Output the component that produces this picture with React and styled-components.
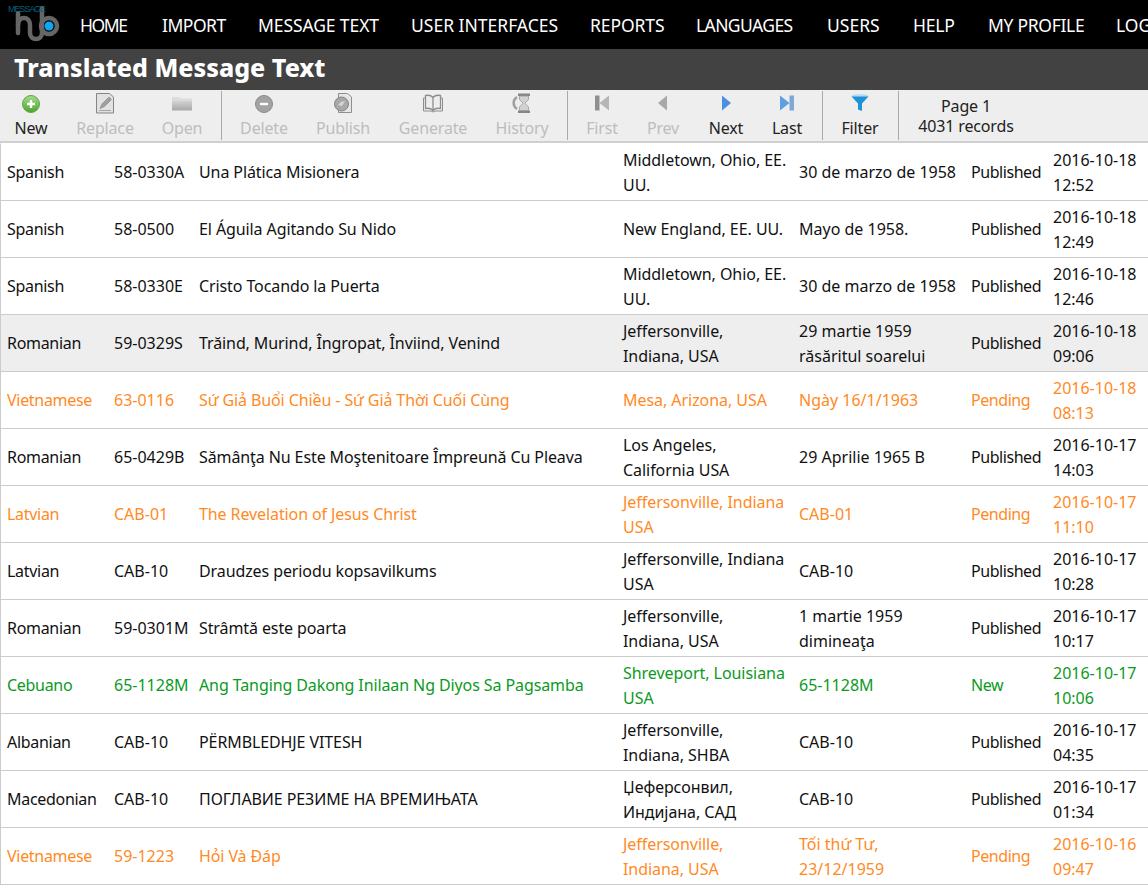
import React from 'react';
import styled, { createGlobalStyle } from 'styled-components';

const GlobalStyle = createGlobalStyle`
  html, body {
    margin: 0;
    padding: 0;
    height: 889px;
    overflow: hidden;
    background: #fff;
    font-family: 'Noto Sans', 'Open Sans', sans-serif;
  }
`;

const NAV = [
  { label: 'HOME', w: 82, track: -1.4 },
  { label: 'IMPORT', w: 96, track: -0.5 },
  { label: 'MESSAGE TEXT', w: 153, track: -0.1 },
  { label: 'USER INTERFACES', w: 179, track: 0 },
  { label: 'REPORTS', w: 106, track: -0.1 },
  { label: 'LANGUAGES', w: 131, track: -0.6 },
  { label: 'USERS', w: 86, track: 0 },
  { label: 'HELP', w: 75, track: -0.2 },
  { label: 'MY PROFILE', w: 128, track: -0.3 },
  { label: 'LOG OUT', w: 90, track: 0 },
];

const ROWS = [
  ['Spanish', '58-0330A', 'Una Plática Misionera', 'Middletown, Ohio, EE.\nUU.', '30 de marzo de 1958', 'Published', '2016-10-18\n12:52'],
  ['Spanish', '58-0500', 'El Águila Agitando Su Nido', 'New England, EE. UU.', 'Mayo de 1958.', 'Published', '2016-10-18\n12:49'],
  ['Spanish', '58-0330E', 'Cristo Tocando la Puerta', 'Middletown, Ohio, EE.\nUU.', '30 de marzo de 1958', 'Published', '2016-10-18\n12:46'],
  ['Romanian', '59-0329S', 'Trăind, Murind, Îngropat, Înviind, Venind', 'Jeffersonville,\nIndiana, USA', '29 martie 1959\nrăsăritul soarelui', 'Published', '2016-10-18\n09:06', 'selected'],
  ['Vietnamese', '63-0116', 'Sứ Giả Buổi Chiều - Sứ Giả Thời Cuối Cùng', 'Mesa, Arizona, USA', 'Ngày 16/1/1963', 'Pending', '2016-10-18\n08:13'],
  ['Romanian', '65-0429B', 'Sămânţa Nu Este Moştenitoare Împreună Cu Pleava', 'Los Angeles,\nCalifornia USA', '29 Aprilie 1965 B', 'Published', '2016-10-17\n14:03'],
  ['Latvian', 'CAB-01', 'The Revelation of Jesus Christ', 'Jeffersonville, Indiana\nUSA', 'CAB-01', 'Pending', '2016-10-17\n11:10'],
  ['Latvian', 'CAB-10', 'Draudzes periodu kopsavilkums', 'Jeffersonville, Indiana\nUSA', 'CAB-10', 'Published', '2016-10-17\n10:28'],
  ['Romanian', '59-0301M', 'Strâmtă este poarta', 'Jeffersonville,\nIndiana, USA', '1 martie 1959\ndimineaţa', 'Published', '2016-10-17\n10:17'],
  ['Cebuano', '65-1128M', 'Ang Tanging Dakong Inilaan Ng Diyos Sa Pagsamba', 'Shreveport, Louisiana\nUSA', '65-1128M', 'New', '2016-10-17\n10:06'],
  ['Albanian', 'CAB-10', 'PËRMBLEDHJE VITESH', 'Jeffersonville,\nIndiana, SHBA', 'CAB-10', 'Published', '2016-10-17\n04:35'],
  ['Macedonian', 'CAB-10', 'ПОГЛАВИЕ РЕЗИМЕ НА ВРЕМИЊАТА', 'Џеферсонвил,\nИндијана, САД', 'CAB-10', 'Published', '2016-10-17\n01:34'],
  ['Vietnamese', '59-1223', 'Hỏi Và Đáp', 'Jeffersonville,\nIndiana, USA', 'Tối thứ Tư,\n23/12/1959', 'Pending', '2016-10-16\n09:47'],
];

const statusColors = {
  Pending: '#ff8a1f',
  New: '#0b9a1e',
  Published: '#111',
};

const Page = styled.div`
  width: 1148px;
  height: 889px;
  overflow: hidden;
`;

const NavBar = styled.nav`
  height: 49px;
  background: #000;
  display: flex;
  align-items: center;
  padding-left: 8px;
  white-space: nowrap;
`;

const Logo = styled.svg`
  width: 54px;
  height: 44px;
  flex: none;
  margin-right: 18px;
  margin-top: -5px;
`;

const NavLink = styled.a`
  color: #fff;
  font-size: 17.5px;
  width: ${(p) => p.$w}px;
  letter-spacing: ${(p) => p.$track}px;
  flex: none;
`;

const TitleBar = styled.h1`
  margin: 0;
  height: 41px;
  line-height: 37px;
  background: #424242;
  color: #fff;
  font-size: 25px;
  font-weight: 800;
  padding-left: 14px;
`;

const Toolbar = styled.div`
  height: 51px;
  background: #eee;
  border-bottom: 2px solid #d0d0d0;
  display: flex;
  align-items: flex-start;
`;

const Group = styled.div`
  display: flex;
  padding: 0 ${(p) => p.$right}px 0 4px;
  height: 49px;
  margin-top: 1px;
  border-right: 1px solid #aaa;
`;

const ToolButton = styled.button`
  width: ${(p) => p.$w}px;
  border: none;
  background: none;
  padding: 0;
  font: inherit;
  font-size: 16px;
  letter-spacing: -0.15px;
  color: ${(p) => (p.$off ? '#bdbdbd' : '#222')};
  display: flex;
  flex-direction: column;
  align-items: center;
  white-space: nowrap;

  svg {
    width: 22px;
    height: 22px;
    margin-top: 2px;
    margin-bottom: 2px;
  }
`;

const PageInfo = styled.div`
  width: 134px;
  text-align: center;
  font-size: 16px;
  line-height: 20px;
  letter-spacing: -0.15px;
  color: #222;
  padding-top: 6px;
`;

const Table = styled.div`
  border-top: 1px solid #fff;
  border-left: 1px solid #ccc;
`;

const Row = styled.div`
  display: grid;
  grid-template-columns: 107px 85px 424px 176px 172px 82px 1fr;
  align-items: center;
  height: 56px;
  border-bottom: 1px solid #ccc;
  background: ${(p) => (p.$selected ? '#eee' : '#fff')};
  color: ${(p) => statusColors[p.$status]};
  font-size: 16px;
  line-height: 25px;

  > :nth-child(1) {
    letter-spacing: -0.3px;
  }
  > :nth-child(3) {
    letter-spacing: -0.1px;
  }
  > :nth-child(4) {
    letter-spacing: -0.05px;
  }
  > :nth-child(6) {
    letter-spacing: -0.45px;
  }
`;

const Cell = styled.div`
  padding-left: 6px;
  padding-top: ${(p) => (p.$multi ? 2 : 0)}px;
  white-space: pre-line;
`;

const Plus = () => (
  <svg viewBox="0 0 22 22">
    <defs>
      <linearGradient id="gr" x1="0" y1="0" x2="0" y2="1">
        <stop offset="0" stopColor="#a6dc8c" />
        <stop offset="1" stopColor="#4aa52e" />
      </linearGradient>
    </defs>
    <circle cx="11" cy="11" r="8.5" fill="url(#gr)" stroke="#5da843" />
    <path d="M11 7v8M7 11h8" stroke="#fff" strokeWidth="2.4" />
  </svg>
);

const ReplaceIcon = () => (
  <svg viewBox="0 0 22 22">
    <path d="M2.500 0.500h13l4 3.500v16h-17z" fill="#e2e2e2" stroke="#858585" />
    <path d="M6 15.500l2-4.500 7-7 2.500 2.500-7 7z" fill="#a0a0a0" stroke="#808080" strokeWidth="0.6" />
    <path d="M5 17.500h12" stroke="#a5a5a5" />
  </svg>
);

const FolderIcon = () => (
  <svg viewBox="0 0 22 22">
    <defs>
      <linearGradient id="fo" x1="0" y1="0" x2="0" y2="1">
        <stop offset="0" stopColor="#d2d2d2" />
        <stop offset="1" stopColor="#a8a8a8" />
      </linearGradient>
    </defs>
    <path d="M1 4h7l1 1.500h12V8H1z" fill="#dcdcdc" />
    <rect x="1" y="8" width="20" height="9.500" fill="url(#fo)" />
  </svg>
);

const MinusIcon = () => (
  <svg viewBox="0 0 22 22">
    <circle cx="11" cy="11" r="8.5" fill="#a3a3a3" stroke="#8a8a8a" />
    <path d="M7 11h8" stroke="#fff" strokeWidth="2.4" />
  </svg>
);

const PublishIcon = () => (
  <svg viewBox="0 0 22 22">
    <path d="M6.500 0.500h9l4 3.500v15.500h-13z" fill="#e6e6e6" stroke="#8f8f8f" />
    <circle cx="9.500" cy="11" r="7" fill="#a8a8a8" stroke="#868686" />
    <path d="M6 12l3-3 4-1-3 5z" fill="#d6d6d6" />
  </svg>
);

const BookIcon = () => (
  <svg viewBox="0 0 22 22" fill="none" stroke="#8e8e8e" strokeWidth="1.3">
    <path d="M11 4.500C9 2.200 6 2 3.500 2.500v13C6 15 9 15.300 11 17.500c2-2.200 5-2.500 7.500-2V2.500C16 2 13 2.200 11 4.500zM11 4.500v13" />
    <path d="M3.500 5H1.500v13H9l2 1 2-1h7.500V5h-2" strokeWidth="1" />
  </svg>
);

const HistoryIcon = () => (
  <svg viewBox="0 0 22 22">
    <path d="M6 4C1.500 7 1.500 13 6 16" fill="none" stroke="#a0a0a0" strokeWidth="2.500" />
    <rect x="7" y="0.500" width="12" height="2.500" fill="#868686" />
    <rect x="7" y="17.500" width="12" height="2.500" fill="#868686" />
    <path d="M8.500 3h9v3.500L14 10.200l3.500 3.800v3.500h-9V14l3.500-3.800-3.500-3.700z" fill="#d2d2d2" stroke="#909090" strokeWidth="0.700" />
  </svg>
);

const JumpIcon = ({ flip, color, dark }) => (
  <svg viewBox="0 0 22 22">
    <g transform={flip ? 'matrix(-1 0 0 1 22 0)' : undefined}>
      <rect x="4" y="2.500" width="4.500" height="15" fill={dark} />
      <path d="M18 2.500v15L8.500 10z" fill={color} />
    </g>
  </svg>
);

const StepIcon = ({ flip, color }) => (
  <svg viewBox="0 0 22 22">
    <path d={flip ? 'M7 2.500v15l9-7.500z' : 'M15 2.500v15l-9-7.500z'} fill={color} />
  </svg>
);

const FilterIcon = () => (
  <svg viewBox="0 0 22 22">
    <ellipse cx="11" cy="3" rx="8.500" ry="2" fill="#b8dcef" />
    <path d="M2.500 3.500h17L13 10.500v7.500L9 16.500v-6z" fill="#1f93d6" />
  </svg>
);

const GROUPS = [
  {
    right: 9,
    items: [
      { label: 'New', w: 54, icon: <Plus /> },
      { label: 'Replace', w: 94, icon: <ReplaceIcon />, off: true },
      { label: 'Open', w: 60, icon: <FolderIcon />, off: true },
    ],
  },
  {
    right: 5,
    items: [
      { label: 'Delete', w: 76, icon: <MinusIcon />, off: true },
      { label: 'Publish', w: 82, icon: <PublishIcon />, off: true },
      { label: 'Generate', w: 98, icon: <BookIcon />, off: true },
      { label: 'History', w: 80, icon: <HistoryIcon />, off: true },
    ],
  },
  {
    right: 6,
    items: [
      { label: 'First', w: 60, icon: <JumpIcon color="#b5b5b5" dark="#8f8f8f" />, off: true },
      { label: 'Prev', w: 62, icon: <StepIcon color="#a8a8a8" />, off: true },
      { label: 'Next', w: 64, icon: <StepIcon flip color="#4a8fe0" /> },
      { label: 'Last', w: 58, icon: <JumpIcon flip color="#5f9fe0" dark="#7fa8d6" /> },
    ],
  },
  {
    right: 5,
    items: [{ label: 'Filter', w: 66, icon: <FilterIcon /> }],
  },
];

function App() {
  return (
    <Page>
      <GlobalStyle />
      <NavBar>
        <Logo viewBox="0 0 54 44">
          <g fill="none" stroke="#666" strokeWidth="4.500" strokeLinecap="round">
            <path d="M10 13v20" />
            <path d="M10 25c0-5 3-7 6-7s6 2 6 7v8c0 4 3 6 6 6s6-2 6-6V8" />
            <circle cx="41" cy="26" r="8" />
          </g>
          <circle cx="41" cy="26" r="4.500" fill="#0ea5f2" />
          <text x="0" y="12" fontSize="9" fill="#0c5f7e" textLength="38" fontFamily="Liberation Sans">MESSAGE</text>
        </Logo>
        {NAV.map((item) => (
          <NavLink key={item.label} $w={item.w} $track={item.track}>{item.label}</NavLink>
        ))}
      </NavBar>
      <TitleBar>Translated Message Text</TitleBar>
      <Toolbar>
        {GROUPS.map((group) => (
          <Group key={group.items[0].label} $right={group.right}>
            {group.items.map((b) => (
              <ToolButton key={b.label} $w={b.w} $off={b.off}>
                {b.icon}
                {b.label}
              </ToolButton>
            ))}
          </Group>
        ))}
        <PageInfo>
          Page 1
          <br />
          4031 records
        </PageInfo>
      </Toolbar>
      <Table>
        {ROWS.map((r) => (
          <Row key={r[1] + r[6]} $status={r[5]} $selected={r[7] === 'selected'}>
            {r.slice(0, 7).map((text, i) => (
              <Cell key={i} $multi={text.includes('\n')}>{text}</Cell>
            ))}
          </Row>
        ))}
      </Table>
    </Page>
  );
}

export default App;
